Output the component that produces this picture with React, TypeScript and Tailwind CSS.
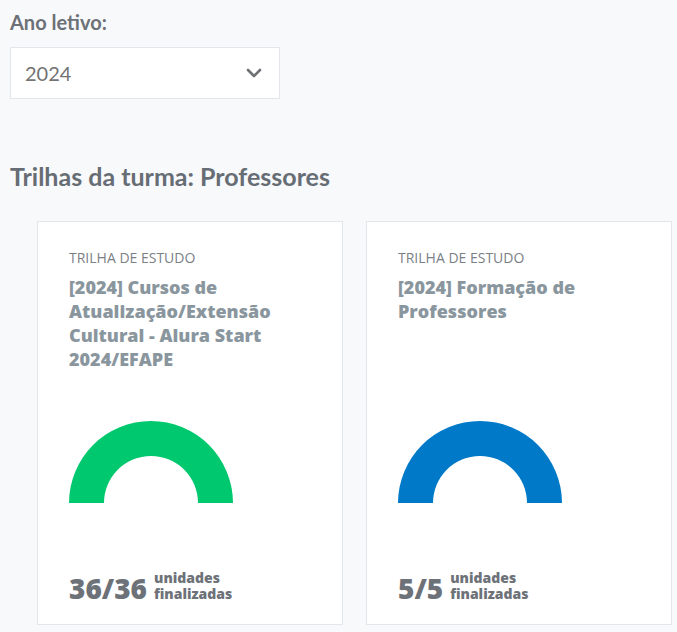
import React from 'react';

type Trail = {
  title: string;
  done: number;
  total: number;
  color: string;
};

const trails: Trail[] = [
  {
    title: '[2024] Cursos de Atualização/Extensão Cultural - Alura Start 2024/EFAPE',
    done: 36,
    total: 36,
    color: '#00c86f',
  },
  {
    title: '[2024] Formação de Professores',
    done: 5,
    total: 5,
    color: '#0079c8',
  },
];

const Gauge: React.FC<{ color: string }> = ({ color }) => (
  <svg width="164" height="82" viewBox="0 0 164 82">
    <path d="M0 82 A82 82 0 0 1 164 82 L129 82 A47 47 0 0 0 35 82 Z" fill={color} />
  </svg>
);

const TrailCard: React.FC<{ trail: Trail }> = ({ trail }) => (
  <div className="bg-white border border-[#e3e7ec] pl-[31px] pr-5 pt-[26px] pb-[22px] flex flex-col font-['Open_Sans',sans-serif]">
    <div className="h-[173px]">
      <p className="text-[14px] leading-[20px] text-[#7b8086] uppercase">Trilha de estudo</p>
      <h3 className="mt-[7px] text-[18px] leading-[24px] font-extrabold text-[#8a969e]">{trail.title}</h3>
    </div>
    <Gauge color={trail.color} />
    <div className="mt-[67px] flex items-end gap-[7px] text-[#6d7278] font-extrabold">
      <span className="text-[28px] leading-[28px]">
        {trail.done}/{trail.total}
      </span>
      <div className="text-[14px] leading-[16px]">
        <div>unidades</div>
        <div>finalizadas</div>
      </div>
    </div>
  </div>
);

export default function App() {
  return (
    <div className="min-h-[632px] bg-[#f8f9fb] px-[10px] pt-[10px] font-['Lato',sans-serif]">
      <label className="block text-[20px] leading-[24px] font-bold text-[#6c7077]">Ano letivo:</label>
      <div className="mt-[13px] w-[270px] h-[52px] bg-white border border-[#e3e6ea] flex items-center justify-between pl-[14px] pr-[17px]">
        <span className="text-[20px] text-[#737373]">2024</span>
        <svg width="16" height="10" viewBox="0 0 16 10" fill="none">
          <path d="M2 2 L8 8 L14 2" stroke="#6d7075" strokeWidth="2.6" strokeLinecap="round" strokeLinejoin="round" />
        </svg>
      </div>
      <h2 className="mt-[61px] text-[25px] leading-[32px] font-bold text-[#676d74]">Trilhas da turma: Professores</h2>
      <div className="mt-[29px] pl-[27px] grid grid-cols-[306px_306px] gap-[23px]">
        {trails.map(t => (
          <TrailCard key={t.title} trail={t} />
        ))}
      </div>
    </div>
  );
}
